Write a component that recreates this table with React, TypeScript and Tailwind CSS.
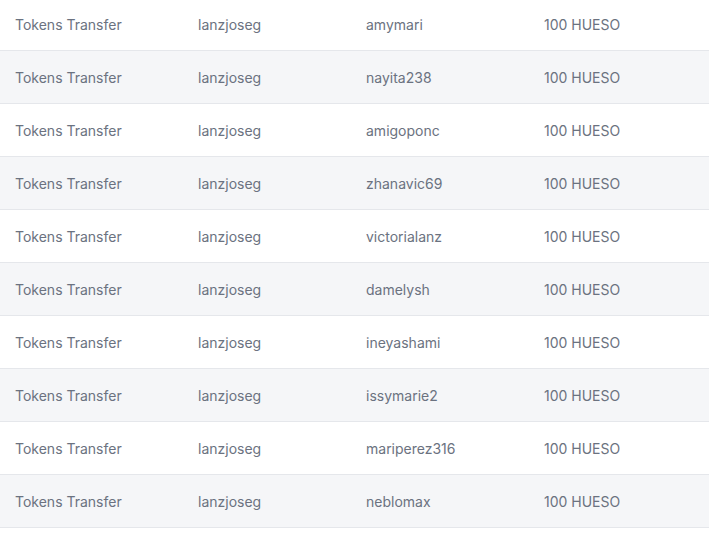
import type { FC } from "react";

const recipients = [
  "amymari",
  "nayita238",
  "amigoponc",
  "zhanavic69",
  "victorialanz",
  "damelysh",
  "ineyashami",
  "issymarie2",
  "mariperez316",
  "neblomax",
];

const App: FC = () => {
  return (
    <div className="w-[709px] h-[539px] overflow-hidden bg-white font-['Inter',sans-serif] text-sm text-[#6b7280]">
      <div className="-mt-[2px]">
        {recipients.map((name, index) => (
          <div
            key={index}
            className={`grid grid-cols-[183px_168px_178px_1fr] h-[53px] pt-[2px] items-center border-b border-[#e5e7eb] ${
              index % 2 === 1 ? "bg-[#f5f6f8]" : "bg-white"
            }`}
          >
            <div className="px-[15px]">Tokens Transfer</div>
            <div className="px-[15px]">lanzjoseg</div>
            <div className="px-[15px]">{name}</div>
            <div className="px-[15px]">100 HUESO</div>
          </div>
        ))}
      </div>
    </div>
  );
};

export default App;
